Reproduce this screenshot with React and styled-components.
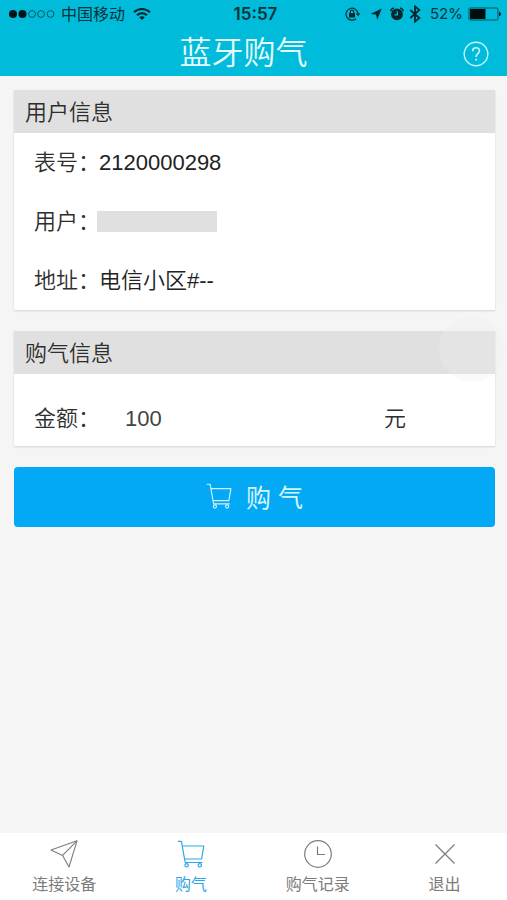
import React from "react";
import styled, { createGlobalStyle } from "styled-components";

const GlobalStyle = createGlobalStyle`
  *, *::before, *::after { box-sizing: border-box; }
  body {
    margin: 0;
    background: #f5f5f5;
    color: #2e2e2e;
    font-family: "Liberation Sans", "Noto Sans CJK SC", sans-serif;
  }
  button, input { font: inherit; color: inherit; }
`;

const Screen = styled.div`
  display: flex;
  flex-direction: column;
  min-height: 100vh;
  position: relative;
`;

const TopArea = styled.header`
  background: #00bcda;
`;

const StatusBar = styled.div`
  display: grid;
  grid-template-columns: 1fr auto 1fr;
  align-items: center;
  height: 28px;
  padding: 0 5px 0 9px;
  font-size: 16px;
  line-height: 28px;
  color: #07323b;
`;

const StatusGroup = styled.div`
  display: flex;
  align-items: center;
  justify-content: ${(p) => (p.$end ? "flex-end" : "flex-start")};
  gap: ${(p) => p.$gap}px;
  white-space: nowrap;
`;

const Carrier = styled.span`
  padding: 2px 2px 0 0;
  line-height: 26px;
`;

const Clock = styled.time`
  font-family: Inter, "Liberation Sans", sans-serif;
  font-size: 17px;
  font-weight: 600;
`;

const Percent = styled.span`
  font-family: Inter, "Liberation Sans", sans-serif;
  font-size: 15px;
  padding-left: 4px;
`;

const TitleBar = styled.div`
  display: grid;
  grid-template-columns: 1fr auto 1fr;
  align-items: center;
  height: 48px;
  padding: 0 17px 0 12px;
`;

const Title = styled.h1`
  grid-column: 2;
  margin: 0;
  padding: 2px 15px 0 0;
  font-size: 32px;
  line-height: 46px;
  font-weight: 350;
  color: #e6fbff;
`;

const HelpButton = styled.button`
  justify-self: end;
  display: flex;
  margin: 4px 0 0;
  padding: 0;
  border: 0;
  background: none;
  color: #c9f6fd;
`;

const Content = styled.main`
  flex: 1;
  display: flex;
  flex-direction: column;
  gap: 21px;
  padding: 14px 12px 20px 14px;
`;

const Card = styled.section`
  background: #fff;
  box-shadow: 0 1px 2px rgba(0, 0, 0, 0.14);
`;

const CardTitle = styled.h2`
  margin: 0;
  padding: 2px 11px 0;
  font-size: 22px;
  line-height: 41px;
  font-weight: 350;
  background: #e0e0e0;
`;

const Details = styled.dl`
  margin: 0;
`;

const Detail = styled.div`
  display: flex;
  align-items: center;
  height: 59px;
  padding: 0 20px;
  font-size: 22px;
`;

const Term = styled.dt`
  width: 65px;
  font-weight: 350;
  line-height: 28px;
  white-space: nowrap;
`;

const Value = styled.dd`
  margin: 0;
  font-weight: 350;
  line-height: 28px;
  color: #222;
`;

const Redacted = styled.span`
  display: block;
  width: 120px;
  height: 21px;
  margin-left: -2px;
  background: #e0e0e0;
`;

const AmountRow = styled.div`
  display: grid;
  grid-template-columns: 91px 1fr 111px;
  align-items: center;
  padding: 25px 0 7px 20px;
  font-size: 22px;
  font-weight: 350;
  line-height: 40px;
`;

const AmountInput = styled.input`
  width: 100%;
  height: 40px;
  padding: 0;
  border: 0;
  outline: 0;
  background: none;
  color: #444;
`;

const BuyButton = styled.button`
  display: flex;
  align-items: center;
  justify-content: center;
  gap: 14px;
  height: 60px;
  padding: 0 0 2px;
  border: 0;
  border-radius: 4px;
  background: #03a9f5;
  color: #d4f4ff;
  font-size: 25px;
`;

const TabBar = styled.nav`
  display: grid;
  grid-template-columns: repeat(4, 1fr);
  height: 67px;
  background: #fff;
`;

const Tab = styled.a`
  display: flex;
  flex-direction: column;
  align-items: center;
  gap: 2px;
  padding: 6px 0 0 2px;
  font-size: 16px;
  line-height: 28px;
  text-decoration: none;
  color: ${(p) => (p.$active ? "#2fa5e6" : "#7c7c7c")};
`;

const AssistiveTouch = styled.div`
  position: absolute;
  top: 316px;
  right: 2px;
  width: 66px;
  height: 66px;
  border-radius: 50%;
  background: rgba(238, 238, 238, 0.3);
  pointer-events: none;
`;

const Signal = () => (
  <svg width="46" height="10" viewBox="0 0 46 10" role="img" aria-label="信号">
    {[4, 13.5, 23, 32, 41.5].map((x, i) => (
      <circle key={x} cx={x} cy="5" r={i < 2 ? 4 : 3.4} fill={i < 2 ? "#021418" : "none"} stroke="#0a4c59" strokeWidth={i < 2 ? 0 : 0.9} />
    ))}
  </svg>
);

const Wifi = () => (
  <svg width="18" height="14" viewBox="0 0 18 14" fill="none" stroke="#05272e" strokeWidth="2.1">
    <path d="M1 5.2C5.6.9 12.4.9 17 5.2" />
    <path d="M4 8.3c2.9-2.6 7.1-2.6 10 0" />
    <path d="M9 13 6.2 10.3c1.6-1.4 4-1.4 5.6 0Z" fill="#05272e" stroke="none" />
  </svg>
);

const RotationLock = () => (
  <svg width="20" height="14" viewBox="0 0 20 14" fill="none" stroke="#06343d" strokeWidth="1.2">
    <path d="M11 11.7A6 6 0 1 1 13 6.6" />
    <path d="M10.7 6.3h4.8l-2.4 3Z" fill="#06343d" stroke="none" />
    <rect x="4" y="6.2" width="6" height="4.3" fill="#05272e" stroke="none" />
    <path d="M5.3 6.4V4.9a1.7 1.7 0 0 1 3.4 0v1.5" />
  </svg>
);

const Location = () => (
  <svg width="15" height="12" viewBox="0 0 15 12" fill="#05272e">
    <path d="M11.7.5 7.3 11.7 5.9 6.5.5 6Z" />
  </svg>
);

const Alarm = () => (
  <svg width="14" height="14" viewBox="0 0 14 14">
    <circle cx="7" cy="7.4" r="5.9" fill="#05272e" />
    <path d="M.9 4.2A3 3 0 0 1 4 1.2M13.1 4.2A3 3 0 0 0 10 1.2" fill="none" stroke="#05272e" strokeWidth="1.6" />
    <path d="M7.4 4.2v3.6H4.5" fill="none" stroke="#00bcda" strokeWidth="1.2" />
  </svg>
);

const Bluetooth = () => (
  <svg width="12" height="18" viewBox="0 0 12 18" fill="none" stroke="#05272e" strokeWidth="1.8">
    <path d="M1.3 5 10.3 13 6 16.6V1.4L10.3 5 1.3 13" />
  </svg>
);

const Battery = () => (
  <svg width="34" height="14" viewBox="0 0 34 14">
    <rect x="1" y="1" width="29" height="12" rx="1.2" fill="none" stroke="#064450" strokeWidth="0.9" />
    <rect x="2" y="2" width="15.5" height="10" fill="#020d10" />
    <path d="M31 4.8c2.6.3 2.6 4.1 0 4.4Z" fill="#05272e" />
  </svg>
);

const HelpIcon = () => (
  <svg width="28" height="28" viewBox="0 0 28 28" fill="none" stroke="currentColor" strokeWidth="1.4">
    <circle cx="14" cy="14" r="11.8" />
    <path d="M10.7 11.2c0-2 1.3-3.4 3.3-3.4s3.4 1.3 3.4 3.1c0 2.5-3.3 2.6-3.3 6" strokeWidth="1.6" />
    <circle cx="14.1" cy="19.8" r="1" fill="currentColor" stroke="none" />
  </svg>
);

const CartIcon = ({ size = 28 }) => (
  <svg width={size} height={size} viewBox="0 0 28 28" fill="none" stroke="currentColor" strokeWidth="1.2" strokeLinejoin="round">
    <path d="M.8 1.3h3.6l3.8 21.2h17.3" />
    <path d="M5.2 6h21.6l-2.2 13H7.6" />
    <circle cx="9.6" cy="25.3" r="1.7" />
    <circle cx="22.8" cy="25.3" r="1.7" />
  </svg>
);

const PlaneIcon = () => (
  <svg width="30" height="30" viewBox="0 0 30 30" fill="none" stroke="currentColor" strokeWidth="1.1" strokeLinejoin="round">
    <path d="M28 1.8 2 11l11.6 5.4L20 28Z" />
    <path d="M28 1.8 13.6 16.4" />
  </svg>
);

const HistoryIcon = () => (
  <svg width="30" height="30" viewBox="0 0 30 30" fill="none" stroke="currentColor" strokeWidth="1.2">
    <circle cx="15" cy="15" r="13.3" />
    <path d="M14.5 7.5v8h7.5" />
  </svg>
);

const CloseIcon = () => (
  <svg width="30" height="30" viewBox="0 0 30 30" fill="none" stroke="currentColor" strokeWidth="1.2">
    <path d="m5.5 5.5 19 19M24.5 5.5l-19 19" />
  </svg>
);

const tabs = [
  { label: "连接设备", href: "#connect", icon: <PlaneIcon /> },
  { label: "购气", href: "#buy", icon: <CartIcon size={28} />, active: true },
  { label: "购气记录", href: "#history", icon: <HistoryIcon /> },
  { label: "退出", href: "#exit", icon: <CloseIcon /> },
];

const TabIcon = styled.span`
  display: flex;
  align-items: center;
  height: 30px;
`;

export default function App() {
  return (
    <Screen>
      <GlobalStyle />
      <TopArea>
        <StatusBar>
          <StatusGroup $gap={6}>
            <Signal />
            <Carrier>中国移动</Carrier>
            <Wifi />
          </StatusGroup>
          <Clock>15:57</Clock>
          <StatusGroup $end $gap={5}>
            <RotationLock />
            <Location />
            <Alarm />
            <Bluetooth />
            <Percent>52%</Percent>
            <Battery />
          </StatusGroup>
        </StatusBar>
        <TitleBar>
          <Title>蓝牙购气</Title>
          <HelpButton type="button" aria-label="帮助">
            <HelpIcon />
          </HelpButton>
        </TitleBar>
      </TopArea>

      <Content>
        <Card>
          <CardTitle>用户信息</CardTitle>
          <Details>
            <Detail>
              <Term>表号：</Term>
              <Value>2120000298</Value>
            </Detail>
            <Detail>
              <Term>用户：</Term>
              <Value><Redacted /></Value>
            </Detail>
            <Detail>
              <Term>地址：</Term>
              <Value>电信小区#--</Value>
            </Detail>
          </Details>
        </Card>

        <Card>
          <CardTitle>购气信息</CardTitle>
          <AmountRow>
            <label htmlFor="amount">金额：</label>
            <AmountInput id="amount" inputMode="decimal" defaultValue="100" />
            <span>元</span>
          </AmountRow>
        </Card>

        <BuyButton type="button">
          <CartIcon size={26} />
          <span>购 气</span>
        </BuyButton>
      </Content>

      <TabBar>
        {tabs.map((tab) => (
          <Tab key={tab.href} href={tab.href} $active={tab.active} aria-current={tab.active ? "page" : undefined}>
            <TabIcon>{tab.icon}</TabIcon>
            {tab.label}
          </Tab>
        ))}
      </TabBar>
      <AssistiveTouch />
    </Screen>
  );
}
